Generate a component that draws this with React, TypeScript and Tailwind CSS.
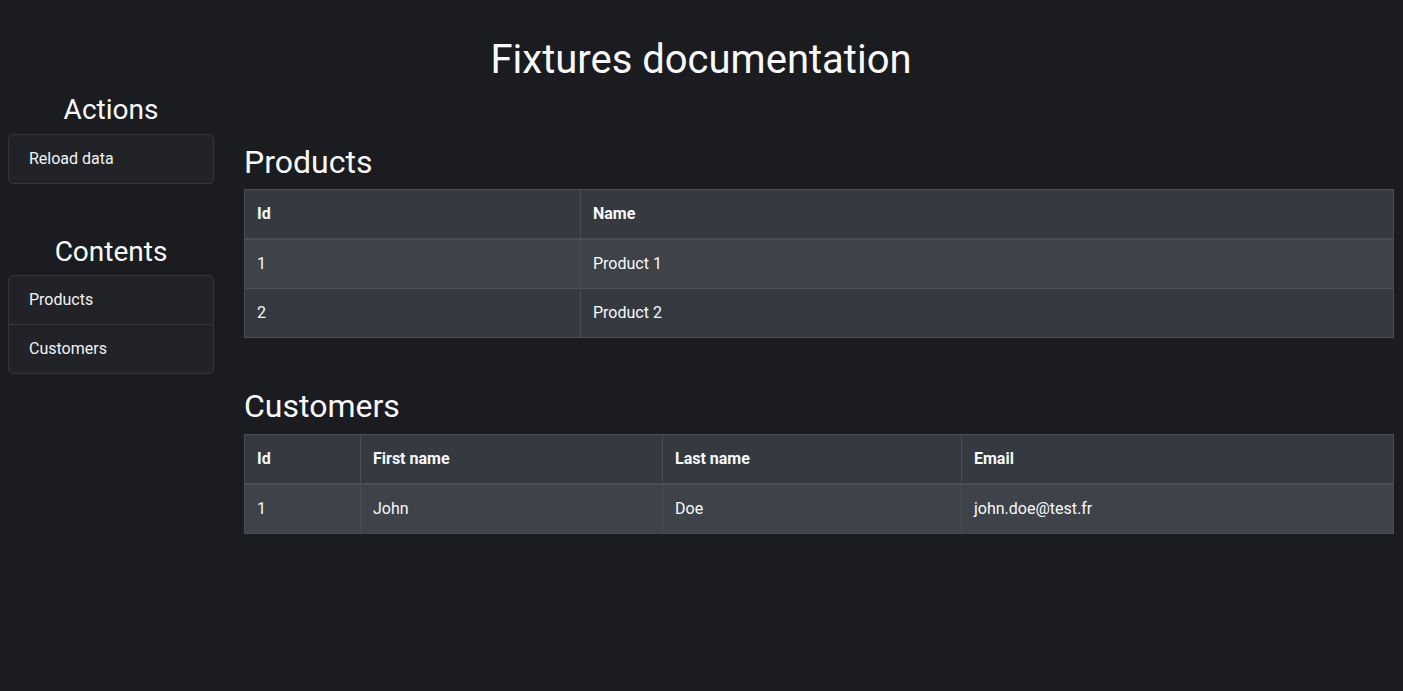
import React from "react";

const font = { fontFamily: "Roboto, 'Liberation Sans', sans-serif" };

const products = [
  { id: 1, name: "Product 1" },
  { id: 2, name: "Product 2" },
];

const customers = [{ id: 1, first: "John", last: "Doe", email: "john.doe@test.fr" }];

function SideBlock({ title, items }: { title: string; items: string[] }) {
  return (
    <div>
      <h3 className="text-center text-[28px] leading-[1.2] font-normal text-[#f8f9fa] mb-[7px]">{title}</h3>
      <ul className="rounded-[5px] border border-[#33373c] bg-[#212327]">
        {items.map((it, i) => (
          <li
            key={it}
            className={
              "px-5 py-3 text-[16px] leading-6 text-[#f1f3f5] " +
              (i > 0 ? "border-t border-[#33373c]" : "")
            }
          >
            {it}
          </li>
        ))}
      </ul>
    </div>
  );
}

function Cell({ children, head, first }: { children: React.ReactNode; head?: boolean; first?: boolean }) {
  const cls =
    "px-3 py-3 text-left text-[16px] leading-6 text-[#f8f9fa] border-[#4a4f55] " +
    (first ? "" : "border-l ") +
    (head ? "font-bold" : "font-normal");
  return head ? <th className={cls}>{children}</th> : <td className={cls}>{children}</td>;
}

export default function App() {
  return (
    <div style={font} className="min-h-[691px] bg-[#1a1c20] text-[#f8f9fa] pl-2 pr-[9px] pt-[36px] pb-10">
      <h1 className="text-center text-[40px] leading-[1.2] font-normal mb-[9px]">Fixtures documentation</h1>
      <div className="flex gap-[30px]">
        <aside className="w-[206px] shrink-0 flex flex-col gap-[51px]">
          <SideBlock title="Actions" items={["Reload data"]} />
          <SideBlock title="Contents" items={["Products", "Customers"]} />
        </aside>
        <main className="flex-1 min-w-0">
          <section className="pt-[50px]">
            <h2 className="text-[32px] leading-[1.2] font-normal mb-2">Products</h2>
            <table className="w-full table-fixed border-collapse border border-[#4a4f55]">
              <colgroup>
                <col className="w-[336px]" />
                <col />
              </colgroup>
              <thead>
                <tr className="bg-[#353940] border-b-2 border-[#4a4f55]">
                  <Cell head first>Id</Cell>
                  <Cell head>Name</Cell>
                </tr>
              </thead>
              <tbody>
                {products.map((p, i) => (
                  <tr
                    key={p.id}
                    className={(i % 2 === 0 ? "bg-[#3e4249]" : "bg-[#353940]") + " border-b border-[#4a4f55]"}
                  >
                    <Cell first>{p.id}</Cell>
                    <Cell>{p.name}</Cell>
                  </tr>
                ))}
              </tbody>
            </table>
          </section>
          <section className="pt-[49px]">
            <h2 className="text-[32px] leading-[1.2] font-normal mb-2">Customers</h2>
            <table className="w-full table-fixed border-collapse border border-[#4a4f55]">
              <colgroup>
                <col className="w-[116px]" />
                <col className="w-[302px]" />
                <col className="w-[299px]" />
                <col />
              </colgroup>
              <thead>
                <tr className="bg-[#353940] border-b-2 border-[#4a4f55]">
                  <Cell head first>Id</Cell>
                  <Cell head>First name</Cell>
                  <Cell head>Last name</Cell>
                  <Cell head>Email</Cell>
                </tr>
              </thead>
              <tbody>
                {customers.map((c) => (
                  <tr key={c.id} className="bg-[#3e4249] border-b border-[#4a4f55]">
                    <Cell first>{c.id}</Cell>
                    <Cell>{c.first}</Cell>
                    <Cell>{c.last}</Cell>
                    <Cell>{c.email}</Cell>
                  </tr>
                ))}
              </tbody>
            </table>
          </section>
        </main>
      </div>
    </div>
  );
}
